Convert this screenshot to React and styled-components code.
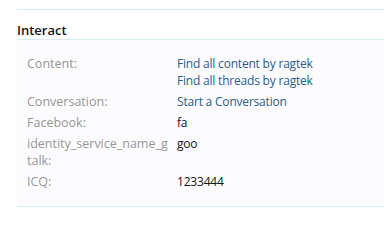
import React from "react";
import styled, { createGlobalStyle } from "styled-components";

const Global = createGlobalStyle`
  html, body { margin: 0; padding: 0; background: #ffffff; }
  body { font-family: "Open Sans", "DejaVu Sans", sans-serif; font-size: 12px; }
`;

const Page = styled.div`
  padding: 9px 0 0 17px;
`;

const Section = styled.section`
  border-top: 1px solid #d7edf2;
  border-bottom: 1px solid #d7edf2;
  background: #fcfcff;
  padding-bottom: 16px;
`;

const Heading = styled.h3`
  margin: 0;
  height: 30px;
  box-sizing: border-box;
  padding-top: 12px;
  border-bottom: 1px solid #d7edf2;
  background: #ffffff;
  font-size: 13px;
  line-height: 17px;
  font-weight: 600;
  color: #141414;
`;

const List = styled.dl`
  margin: 0;
  padding: 15px 0 0 10px;
  display: flex;
  flex-direction: column;
  gap: 4px;
`;

const Row = styled.div`
  display: flex;
  line-height: 17px;
`;

const Label = styled.dt`
  width: 150px;
  box-sizing: border-box;
  padding-right: 6px;
  flex: none;
  color: #969696;
  font-size: 12.5px;
  word-break: break-all;
`;

const Value = styled.dd`
  margin: 0;
  display: flex;
  flex-direction: column;
  letter-spacing: -0.2px;
  color: ${(p) => (p.$link ? "#2b5b8a" : "#141414")};
`;

const Link = styled.a`
  color: #2b5b8a;
  text-decoration: none;
`;

export default function App() {
  return (
    <>
      <Global />
      <Page>
        <Section>
          <Heading>Interact</Heading>
          <List>
            <Row>
              <Label>Content:</Label>
              <Value $link>
                <Link href="#">Find all content by ragtek</Link>
                <Link href="#">Find all threads by ragtek</Link>
              </Value>
            </Row>
            <Row>
              <Label>Conversation:</Label>
              <Value $link>
                <Link href="#">Start a Conversation</Link>
              </Value>
            </Row>
            <Row>
              <Label>Facebook:</Label>
              <Value>fa</Value>
            </Row>
            <Row>
              <Label>identity_service_name_gtalk:</Label>
              <Value>goo</Value>
            </Row>
            <Row>
              <Label>ICQ:</Label>
              <Value>1233444</Value>
            </Row>
          </List>
        </Section>
      </Page>
    </>
  );
}
